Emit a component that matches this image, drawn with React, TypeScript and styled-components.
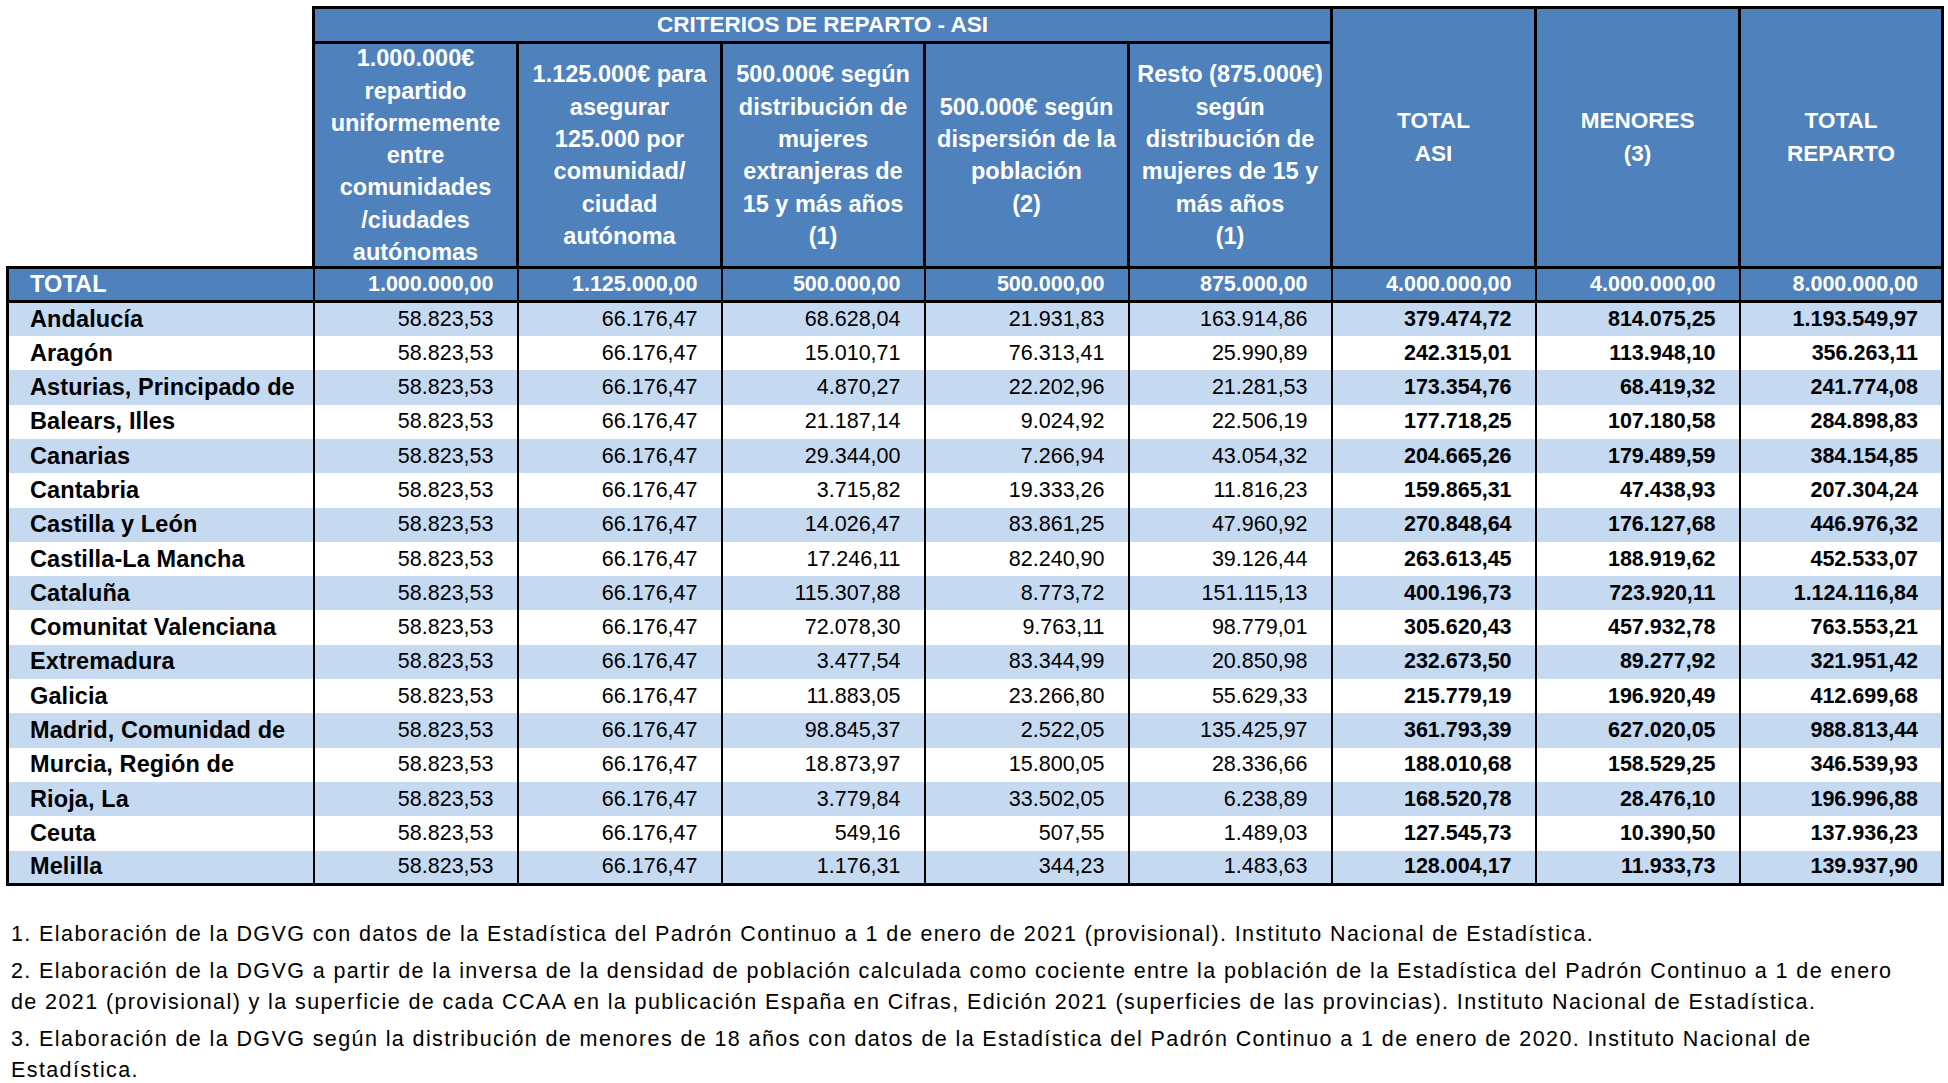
import React from 'react'
import styled, { createGlobalStyle } from 'styled-components'

const rows: string[][] = [
	['Andalucía', '58.823,53', '66.176,47', '68.628,04', '21.931,83', '163.914,86', '379.474,72', '814.075,25', '1.193.549,97'],
	['Aragón', '58.823,53', '66.176,47', '15.010,71', '76.313,41', '25.990,89', '242.315,01', '113.948,10', '356.263,11'],
	['Asturias, Principado de', '58.823,53', '66.176,47', '4.870,27', '22.202,96', '21.281,53', '173.354,76', '68.419,32', '241.774,08'],
	['Balears, Illes', '58.823,53', '66.176,47', '21.187,14', '9.024,92', '22.506,19', '177.718,25', '107.180,58', '284.898,83'],
	['Canarias', '58.823,53', '66.176,47', '29.344,00', '7.266,94', '43.054,32', '204.665,26', '179.489,59', '384.154,85'],
	['Cantabria', '58.823,53', '66.176,47', '3.715,82', '19.333,26', '11.816,23', '159.865,31', '47.438,93', '207.304,24'],
	['Castilla y León', '58.823,53', '66.176,47', '14.026,47', '83.861,25', '47.960,92', '270.848,64', '176.127,68', '446.976,32'],
	['Castilla-La Mancha', '58.823,53', '66.176,47', '17.246,11', '82.240,90', '39.126,44', '263.613,45', '188.919,62', '452.533,07'],
	['Cataluña', '58.823,53', '66.176,47', '115.307,88', '8.773,72', '151.115,13', '400.196,73', '723.920,11', '1.124.116,84'],
	['Comunitat Valenciana', '58.823,53', '66.176,47', '72.078,30', '9.763,11', '98.779,01', '305.620,43', '457.932,78', '763.553,21'],
	['Extremadura', '58.823,53', '66.176,47', '3.477,54', '83.344,99', '20.850,98', '232.673,50', '89.277,92', '321.951,42'],
	['Galicia', '58.823,53', '66.176,47', '11.883,05', '23.266,80', '55.629,33', '215.779,19', '196.920,49', '412.699,68'],
	['Madrid, Comunidad de', '58.823,53', '66.176,47', '98.845,37', '2.522,05', '135.425,97', '361.793,39', '627.020,05', '988.813,44'],
	['Murcia, Región de', '58.823,53', '66.176,47', '18.873,97', '15.800,05', '28.336,66', '188.010,68', '158.529,25', '346.539,93'],
	['Rioja, La', '58.823,53', '66.176,47', '3.779,84', '33.502,05', '6.238,89', '168.520,78', '28.476,10', '196.996,88'],
	['Ceuta', '58.823,53', '66.176,47', '549,16', '507,55', '1.489,03', '127.545,73', '10.390,50', '137.936,23'],
	['Melilla', '58.823,53', '66.176,47', '1.176,31', '344,23', '1.483,63', '128.004,17', '11.933,73', '139.937,90'],
]

const totals = ['1.000.000,00', '1.125.000,00', '500.000,00', '500.000,00', '875.000,00', '4.000.000,00', '4.000.000,00', '8.000.000,00']

const criterios: string[][] = [
	['1.000.000€', 'repartido', 'uniformemente', 'entre', 'comunidades', '/ciudades', 'autónomas'],
	['1.125.000€ para', 'asegurar', '125.000 por', 'comunidad/', 'ciudad', 'autónoma'],
	['500.000€ según', 'distribución de', 'mujeres', 'extranjeras de', '15 y más años', '(1)'],
	['500.000€ según', 'dispersión de la', 'población', '(2)'],
	['Resto (875.000€)', 'según', 'distribución de', 'mujeres de 15 y', 'más años', '(1)'],
]

const bigHeads: string[][] = [
	['TOTAL', 'ASI'],
	['MENORES', '(3)'],
	['TOTAL', 'REPARTO'],
]

// column widths of the printed sheet
const colWidths = [306, 204, 204, 203, 204, 203, 204, 204, 203]

const GlobalStyle = createGlobalStyle`
	html, body {
		margin: 0;
		padding: 0;
		background: #fff;
	}
	body {
		font-family: 'Liberation Sans', Arial, sans-serif;
		color: #000;
	}
`

const Page = styled.main`
	padding: 6px 6px 0 6px;
	width: 1935px;
`

const Table = styled.table`
	width: 1935px;
	table-layout: fixed;
	border-collapse: collapse;
`

const Blank = styled.th`
	border: none;
	background: #fff;
	padding: 0;
`

const HeadRow = styled.tr<{ $h: number }>`
	height: ${(p) => p.$h}px;
`

const HeadCell = styled.th<{ $size?: number }>`
	background: #4f81bd;
	color: #fff;
	border: 3px solid #000;
	font-weight: bold;
	font-size: ${(p) => p.$size ?? 23.5}px;
	line-height: 32.3px;
	text-align: center;
	vertical-align: middle;
	padding: 0;
	white-space: nowrap;
`

/* lines may run onto the borders, as in the sheet, without growing the row */
const HeadText = styled.div`
	height: 218px;
	display: flex;
	flex-direction: column;
	justify-content: center;
`

const Line = styled.span`
	display: block;
`

const TotalRow = styled.tr`
	height: 34px;
	background: #4f81bd;
	color: #fff;
	font-weight: bold;
	td {
		border-top: 3px solid #000;
		border-bottom: 3px solid #000;
	}
`

const Body = styled.tbody`
	tr:last-child td {
		border-bottom: 3px solid #000;
	}
`

const DataRow = styled.tr<{ $shade: boolean }>`
	height: 34.3px;
	background: ${(p) => (p.$shade ? '#c5d9f1' : '#fff')};
`

const Name = styled.td`
	border-left: 3px solid #000;
	border-right: 2px solid #000;
	padding: 0 0 0 21px;
	font-size: 23.5px;
	letter-spacing: 0.1px;
	font-weight: bold;
	text-align: left;
	white-space: nowrap;
	vertical-align: middle;
`

const Num = styled.td<{ $bold?: boolean; $last?: boolean }>`
	border-left: 2px solid #000;
	border-right: ${(p) => (p.$last ? 3 : 2)}px solid #000;
	padding: 0 23px 0 0;
	font-size: 21.5px;
	font-weight: ${(p) => (p.$bold ? 'bold' : 'normal')};
	text-align: right;
	white-space: nowrap;
	vertical-align: middle;
`

const Notes = styled.section`
	margin-top: 33px;
	padding-left: 5px;
`

const Note = styled.p`
	margin: 0 0 6px;
	font-size: 21.5px;
	letter-spacing: 1.4px;
	line-height: 31px;
	white-space: nowrap;
`

const App: React.FC = () => (
	<Page>
		<GlobalStyle />
		<Table>
			<colgroup>
				{colWidths.map((w, i) => (
					<col key={i} style={{ width: w }} />
				))}
			</colgroup>
			<thead>
				<HeadRow $h={35}>
					<Blank rowSpan={2} />
					<HeadCell colSpan={5} $size={22.5}>
						CRITERIOS DE REPARTO - ASI
					</HeadCell>
					{bigHeads.map((lines, i) => (
						<HeadCell key={i} rowSpan={2} $size={22.5}>
							{lines.map((l) => (
								<Line key={l}>{l}</Line>
							))}
						</HeadCell>
					))}
				</HeadRow>
				<HeadRow $h={225}>
					{criterios.map((lines, i) => (
						<HeadCell key={i}>
							<HeadText>
								{lines.map((l, j) => (
									<Line key={j}>{l}</Line>
								))}
							</HeadText>
						</HeadCell>
					))}
				</HeadRow>
			</thead>
			<Body>
				<TotalRow>
					<Name>TOTAL</Name>
					{totals.map((v, i) => (
						<Num key={i} $bold $last={i === totals.length - 1}>
							{v}
						</Num>
					))}
				</TotalRow>
				{rows.map(([name, ...vals], r) => (
					<DataRow key={name} $shade={r % 2 === 0}>
						<Name>{name}</Name>
						{vals.map((v, i) => (
							<Num key={i} $bold={i >= 5} $last={i === vals.length - 1}>
								{v}
							</Num>
						))}
					</DataRow>
				))}
			</Body>
		</Table>
		<Notes>
			<Note>
				1. Elaboración de la DGVG con datos de la Estadística del Padrón Continuo a 1 de enero de 2021 (provisional). Instituto Nacional de Estadística.
			</Note>
			<Note>
				2. Elaboración de la DGVG a partir de la inversa de la densidad de población calculada como cociente entre la población de la Estadística del Padrón Continuo a 1 de enero
				<br />
				de 2021 (provisional) y la superficie de cada CCAA en la publicación España en Cifras, Edición 2021 (superficies de las provincias). Instituto Nacional de Estadística.
			</Note>
			<Note>
				3. Elaboración de la DGVG según la distribución de menores de 18 años con datos de la Estadística del Padrón Continuo a 1 de enero de 2020. Instituto Nacional de
				<br />
				Estadística.
			</Note>
		</Notes>
	</Page>
)

export default App
